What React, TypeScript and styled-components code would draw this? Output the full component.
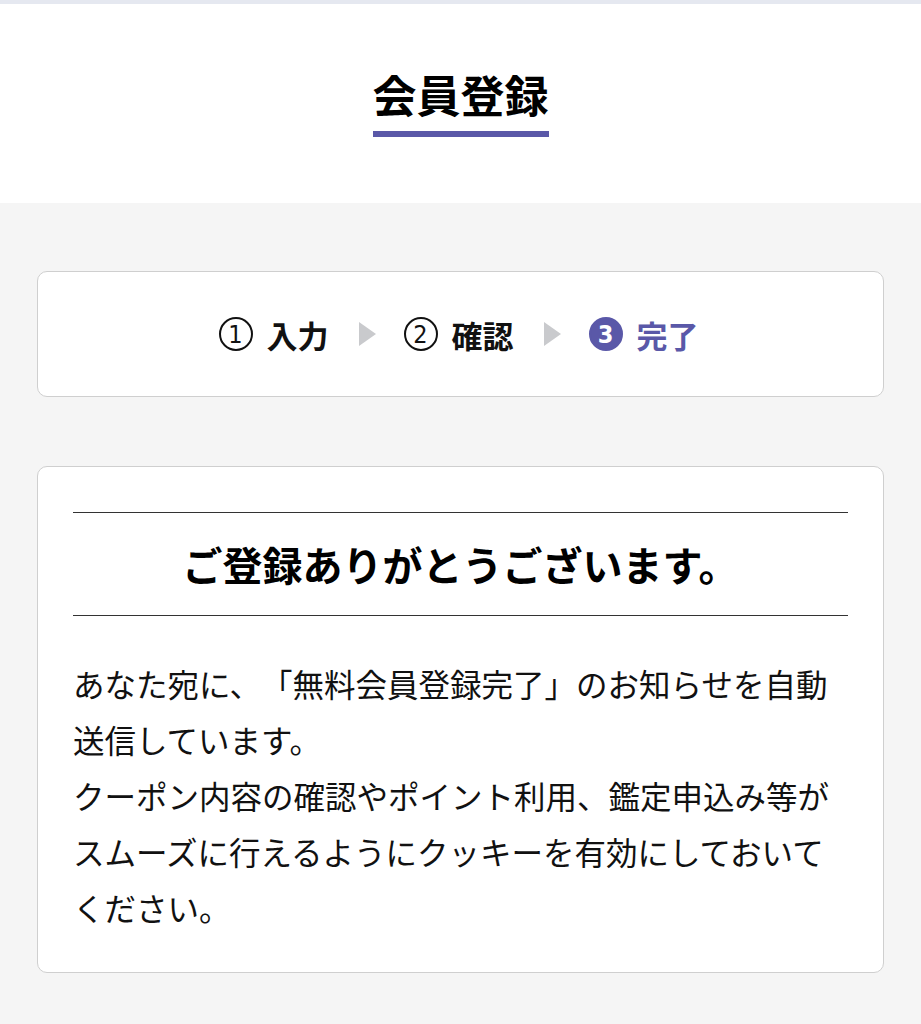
import React from 'react';
import styled, { createGlobalStyle } from 'styled-components';

const accent = '#5a58a8';

const GlobalStyle = createGlobalStyle`
  html, body {
    margin: 0;
    padding: 0;
    background: #f5f5f5;
  }
  body {
    font-family: 'Noto Sans CJK JP', 'Noto Sans', sans-serif;
    color: #111;
    text-spacing-trim: space-all;
  }
`;

const Page = styled.div`
  width: 921px;
  min-height: 1024px;
  background: #f5f5f5;
`;

const Header = styled.header`
  background: #fff;
  border-top: 4px solid #e5e8f0;
  height: 203px;
  display: flex;
  justify-content: center;
  align-items: flex-start;
  box-sizing: border-box;
  padding-top: 68px;
`;

const Title = styled.h1`
  margin: 0;
  font-size: 44px;
  line-height: 44px;
  font-weight: 700;
  color: #000;
  padding-bottom: 15px;
  border-bottom: 6px solid ${accent};
`;

const Main = styled.main`
  padding: 68px 37px 52px;
  display: flex;
  flex-direction: column;
  gap: 69px;
`;

const Card = styled.section`
  background: #fff;
  border: 1px solid #cfcfcf;
  border-radius: 10px;
`;

const StepCard = styled(Card)`
  height: 126px;
  box-sizing: border-box;
  display: flex;
  justify-content: center;
  align-items: center;
  gap: 30px;
  padding-right: 4px;
`;

const Step = styled.div<{ $active?: boolean }>`
  display: flex;
  align-items: center;
  gap: 14px;
  font-size: 31px;
  font-weight: 700;
  line-height: 1;
  color: ${(p) => (p.$active ? accent : '#111')};
`;

const Num = styled.span<{ $active?: boolean }>`
  width: 34px;
  height: 34px;
  flex: none;
  box-sizing: border-box;
  border-radius: 50%;
  border: 2px solid ${(p) => (p.$active ? accent : '#111')};
  background: ${(p) => (p.$active ? accent : 'transparent')};
  color: ${(p) => (p.$active ? '#fff' : '#111')};
  display: flex;
  align-items: center;
  justify-content: center;
  font-family: 'DejaVu Sans Condensed', 'DejaVu Sans', sans-serif;
  font-size: 25px;
  font-weight: ${(p) => (p.$active ? 700 : 400)};
`;

const Arrow = styled.span`
  width: 0;
  height: 0;
  border-top: 12px solid transparent;
  border-bottom: 12px solid transparent;
  border-left: 17px solid #c9cacd;
  margin-right: -2px;
`;

const MessageCard = styled(Card)`
  padding: 45px 35px 37px;
`;

const Heading = styled.h2`
  margin: 0;
  border-top: 1.5px solid #333;
  border-bottom: 1.5px solid #333;
  height: 104px;
  box-sizing: border-box;
  display: flex;
  align-items: center;
  justify-content: center;
  font-size: 40px;
  font-weight: 700;
  color: #000;
`;

const Body = styled.p`
  margin: 39px 0 0;
  font-size: 31.5px;
  line-height: 56px;
  color: #111;
`;

const steps = [
  { n: '1', label: '入力' },
  { n: '2', label: '確認' },
  { n: '3', label: '完了', active: true },
];

export default function App() {
  return (
    <Page>
      <GlobalStyle />
      <Header>
        <Title>会員登録</Title>
      </Header>
      <Main>
        <StepCard>
          {steps.map((s, i) => (
            <React.Fragment key={s.n}>
              {i > 0 && <Arrow />}
              <Step $active={s.active}>
                <Num $active={s.active}>{s.n}</Num>
                {s.label}
              </Step>
            </React.Fragment>
          ))}
        </StepCard>
        <MessageCard>
          <Heading>ご登録ありがとうございます。</Heading>
          <Body>
            あなた宛に、「無料会員登録完了」のお知らせを自動送信しています。
            <br />
            クーポン内容の確認やポイント利用、鑑定申込み等がスムーズに行えるようにクッキーを有効にしておいてください。
          </Body>
        </MessageCard>
      </Main>
    </Page>
  );
}
